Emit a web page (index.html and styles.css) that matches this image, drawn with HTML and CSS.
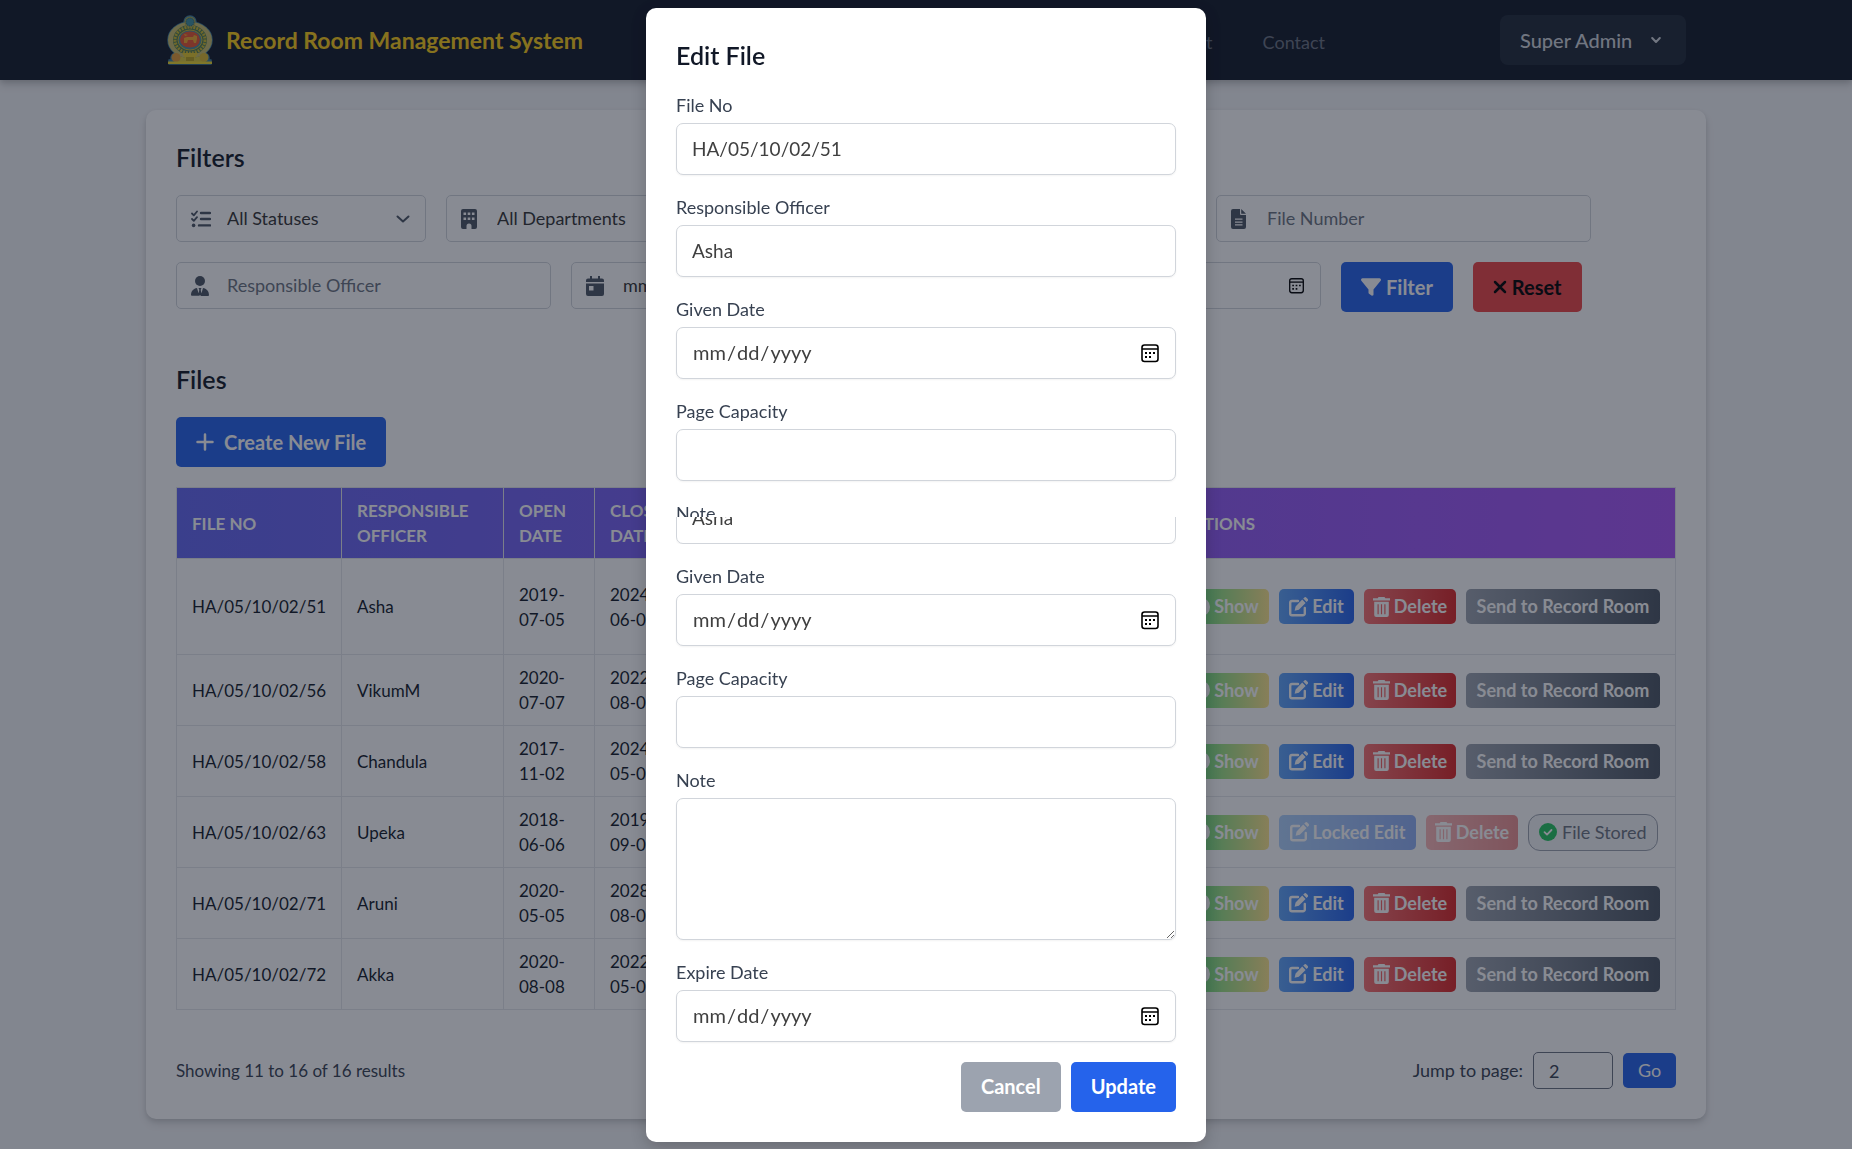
FILE: index.html
```html
<!DOCTYPE html>
<html lang="en">
<head>
<meta charset="utf-8">
<meta name="viewport" content="width=device-width, initial-scale=1">
<title>Record Room Management System</title>
<link rel="stylesheet" href="styles.css">
</head>
<body>

<svg class="sprite" aria-hidden="true">
  <symbol id="i-tasks" viewBox="0 0 20 20"><path d="M1 4.5l1.8 1.8L6 2.5M1 10l1.8 1.8L6 8.2" fill="none" stroke="currentColor" stroke-width="1.8" stroke-linecap="round" stroke-linejoin="round"/><circle cx="2.6" cy="16.4" r="1.8"/><path d="M10 4h9M10 10h9M8 16.4h11" fill="none" stroke="currentColor" stroke-width="2.4" stroke-linecap="round"/></symbol>
  <symbol id="i-building" viewBox="0 0 16 20"><path fill-rule="evenodd" d="M2 0h12a2 2 0 0 1 2 2v16a2 2 0 0 1-2 2h-3.5v-3a2.5 2.5 0 0 0-5 0v3H2a2 2 0 0 1-2-2V2a2 2 0 0 1 2-2zM2.5 3.5v2.6h2.6V3.500zM6.700 3.500v2.600h2.600V3.500zM10.900 3.500v2.600h2.600V3.500zM2.500 8.500v2.600h2.600V8.500zM6.700 8.500v2.600h2.600V8.500zM10.900 8.500v2.600h2.600V8.500z"/></symbol>
  <symbol id="i-file" viewBox="0 0 15 20"><path fill-rule="evenodd" d="M2 0h7v5a1 1 0 0 0 1 1h5v12a2 2 0 0 1-2 2H2a2 2 0 0 1-2-2V2a2 2 0 0 1 2-2zM10.200 0L15 4.800h-4.800zM4 9.500v1.300h7.500V9.500zM4 12.400v1.300h7.500v-1.300zM4 15.300v1.300h7.500v-1.300z"/></symbol>
  <symbol id="i-officer" viewBox="0 0 18 20"><circle cx="9" cy="5" r="5"/><path d="M6 12l2.300 7.800H.9A.9.9 0 0 1 0 19c0-3.800 2.500-6.500 6-7zM12 12c3.500.5 6 3.200 6 7a.9.9 0 0 1-.9.900H9.700zM7.500 12h3l-.8 1.700.8 4L9 20l-1.500-2.300.8-4z"/></symbol>
  <symbol id="i-calendar" viewBox="0 0 18 20"><path fill-rule="evenodd" d="M4 0h2v2.500h6V0h2v2.500h2a2 2 0 0 1 2 2V6H0V4.500a2 2 0 0 1 2-2h2zM0 7.500h18V18a2 2 0 0 1-2 2H2a2 2 0 0 1-2-2zM3 10v4.500h4.500V10z"/></symbol>
  <symbol id="i-filter" viewBox="0 0 512 448"><path transform="translate(0-32)" d="M3.900 54.900C10.500 40.900 24.500 32 40 32H472c15.500 0 29.500 8.900 36.100 22.900s4.600 30.500-5.200 42.500L320 320.900V448c0 12.100-6.800 23.200-17.700 28.600s-23.800 4.300-33.500-3l-64-48c-8.100-6-12.800-15.500-12.800-25.600V320.900L9 97.300C-.7 85.400-2.800 68.800 3.900 54.900z"/></symbol>
  <symbol id="i-x" viewBox="0 0 14 14"><path d="M2 2l10 10M12 2L2 12" fill="none" stroke="currentColor" stroke-width="2.500" stroke-linecap="round"/></symbol>
  <symbol id="i-plus" viewBox="0 0 18 18"><path d="M9 1.500v15M1.500 9h15" fill="none" stroke="currentColor" stroke-width="2.500" stroke-linecap="round"/></symbol>
  <symbol id="i-edit" viewBox="0 0 19 20"><path d="M9 4H3a1.800 1.800 0 0 0-1.800 1.800V16.500A1.800 1.800 0 0 0 3 18.300h11a1.800 1.800 0 0 0 1.800-1.800V11" fill="none" stroke="currentColor" stroke-width="2.400" stroke-linecap="round"/><path d="M13.200 2.600l3.400 3.400-6.800 6.800-4.200 1 1-4.300zM14.200 1.600l.9-.9a1.700 1.700 0 0 1 2.400 0l1 1a1.700 1.700 0 0 1 0 2.400l-.9.900z"/></symbol>
  <symbol id="i-trash" viewBox="0 0 17 20"><path fill-rule="evenodd" d="M5.500 0h6l.8 1.200H17v2.400H0V1.200h4.700zM1.200 4.800h14.600V18a2 2 0 0 1-2 2H3.200a2 2 0 0 1-2-2zM4.500 7.300v10h1.200v-10zM7.900 7.300v10h1.200v-10zM11.300 7.300v10h1.200v-10z"/></symbol>
  <symbol id="i-eye" viewBox="0 0 20 20"><path fill-rule="evenodd" d="M10 0a10 10 0 1 1 0 20 10 10 0 0 1 0-20zm0 5a5 5 0 1 0 0 10 5 5 0 0 0 0-10z"/></symbol>
  <symbol id="i-chev" viewBox="0 0 14 8"><path d="M1.500 1.500L7 6.500l5.500-5" fill="none" stroke="currentColor" stroke-width="2" stroke-linecap="round" stroke-linejoin="round"/></symbol>
  <symbol id="i-chev-bold" viewBox="0 0 10 8"><path d="M1.200 2L5 6l3.800-4" fill="none" stroke="currentColor" stroke-width="2" stroke-linecap="round" stroke-linejoin="round"/></symbol>
  <symbol id="i-check" viewBox="0 0 18 18"><circle cx="9" cy="9" r="9" fill="#22c55e"/><path d="M5.500 9.200l2.500 2.400 4.500-4.600" fill="none" stroke="#fff" stroke-width="1.800" stroke-linecap="round" stroke-linejoin="round"/></symbol>
</svg>

<header class="topbar">
  <div class="topbar-inner">
    <a class="brand" href="#">
      <svg class="emblem" viewBox="0 0 48 50" aria-hidden="true">
        <g fill="#3f7f9c" stroke="#3f7f9c" stroke-width="1.500" stroke-linejoin="round"><circle cx="24" cy="7" r="6"/><ellipse cx="24" cy="25" rx="22" ry="18"/><circle cx="10" cy="43" r="5"/><circle cx="38" cy="43" r="5"/><path d="M3 45h42v4H3z"/></g>
        <ellipse cx="24" cy="25" rx="22" ry="18" fill="#c9bd6a"/>
        <path d="M8 38q16 10 32 0l-4 10H12z" fill="#d8c93a"/>
        <ellipse cx="24" cy="25" rx="17" ry="15" fill="#4d7a52"/>
        <ellipse cx="24" cy="25" rx="15" ry="13" fill="none" stroke="#cdb82c" stroke-width="3" stroke-dasharray="2 1"/>
        <ellipse cx="24" cy="25" rx="12" ry="10" fill="#4d8a9a" stroke="#cdb82c" stroke-width="1"/>
        <ellipse cx="24" cy="24.500" rx="10" ry="8" fill="#e8552f"/>
        <path d="M18 27v-4l3-1h6l1-2 3 1v3l-1 4h-2l-1-3h-5l-1 3h-3zM19 21l-1-2 4 1z" fill="#f0a82c"/>
        <circle cx="24" cy="7" r="5.500" fill="#a9a54a"/>
        <circle cx="24" cy="7" r="4" fill="#3f8f9c" stroke="#275f6b" stroke-dasharray="1 1"/>
        <path d="M16 38h16l-3 5H19z" fill="#e4c92a"/><path d="M20 42h8v4h-8z" fill="#b9a21e"/>
        <circle cx="10" cy="42.500" r="4.500" fill="#e39a34"/><circle cx="38" cy="42.500" r="4.500" fill="#dcb92c"/>
        <path d="M2 46.500h44v2.500H2z" fill="#ecd62c"/>
      </svg>
      <span>Record Room Management System</span>
    </a>
    <nav class="links"><a href="#">About</a><a href="#">Contact</a></nav>
    <button class="user" type="button">Super Admin <svg aria-hidden="true"><use href="#i-chev-bold"/></svg></button>
  </div>
</header>

<main class="card">
  <h2>Filters</h2>
  <form class="filters">
    <label class="field short"><svg class="w20"><use href="#i-tasks"/></svg><select aria-label="Status"><option>All Statuses</option></select><svg class="arrow"><use href="#i-chev"/></svg></label>
    <label class="field short"><svg class="w16"><use href="#i-building"/></svg><select aria-label="Department"><option>All Departments</option></select><svg class="arrow"><use href="#i-chev"/></svg></label>
    <label class="field long"><input type="text" aria-label="Search"></label>
    <label class="field"><svg class="w15"><use href="#i-file"/></svg><input type="text" placeholder="File Number" aria-label="File Number"></label>
    <label class="field"><svg class="w18"><use href="#i-officer"/></svg><input type="text" placeholder="Responsible Officer" aria-label="Responsible Officer"></label>
    <label class="field date"><svg class="w18"><use href="#i-calendar"/></svg><input type="date" aria-label="From date"></label>
    <label class="field date"><svg class="w18"><use href="#i-calendar"/></svg><input type="date" aria-label="To date"></label>
    <button class="btn primary filter" type="button"><svg><use href="#i-filter"/></svg>Filter</button>
    <button class="btn danger" type="reset"><svg><use href="#i-x"/></svg>Reset</button>
  </form>

  <h2>Files</h2>
  <button class="btn primary create" type="button"><svg><use href="#i-plus"/></svg>Create New File</button>

  <table class="files">
    <colgroup><col class="c-no"><col class="c-officer"><col class="c-date"><col class="c-date"><col><col class="c-actions"></colgroup>
    <thead><tr><th>File No</th><th>Responsible Officer</th><th>Open Date</th><th>Close Date</th><th></th><th>Actions</th></tr></thead>
    <tbody>
      <tr class="tall"><td>HA/05/10/02/51</td><td>Asha</td><td>2019-07-05</td><td>2024-06-05</td><td></td><td><div class="actions"><button class="act show"><svg><use href="#i-eye"/></svg>Show</button><button class="act edit"><svg><use href="#i-edit"/></svg>Edit</button><button class="act delete"><svg><use href="#i-trash"/></svg>Delete</button><button class="act send">Send to Record Room</button></div></td></tr>
      <tr><td>HA/05/10/02/56</td><td>VikumM</td><td>2020-07-07</td><td>2022-08-07</td><td></td><td><div class="actions"><button class="act show"><svg><use href="#i-eye"/></svg>Show</button><button class="act edit"><svg><use href="#i-edit"/></svg>Edit</button><button class="act delete"><svg><use href="#i-trash"/></svg>Delete</button><button class="act send">Send to Record Room</button></div></td></tr>
      <tr><td>HA/05/10/02/58</td><td>Chandula</td><td>2017-11-02</td><td>2024-05-02</td><td></td><td><div class="actions"><button class="act show"><svg><use href="#i-eye"/></svg>Show</button><button class="act edit"><svg><use href="#i-edit"/></svg>Edit</button><button class="act delete"><svg><use href="#i-trash"/></svg>Delete</button><button class="act send">Send to Record Room</button></div></td></tr>
      <tr><td>HA/05/10/02/63</td><td>Upeka</td><td>2018-06-06</td><td>2019-09-06</td><td></td><td><div class="actions"><button class="act show"><svg><use href="#i-eye"/></svg>Show</button><button class="act edit locked" disabled><svg><use href="#i-edit"/></svg>Locked Edit</button><button class="act delete" disabled><svg><use href="#i-trash"/></svg>Delete</button><span class="stored"><svg><use href="#i-check"/></svg>File Stored</span></div></td></tr>
      <tr><td>HA/05/10/02/71</td><td>Aruni</td><td>2020-05-05</td><td>2028-08-05</td><td></td><td><div class="actions"><button class="act show"><svg><use href="#i-eye"/></svg>Show</button><button class="act edit"><svg><use href="#i-edit"/></svg>Edit</button><button class="act delete"><svg><use href="#i-trash"/></svg>Delete</button><button class="act send">Send to Record Room</button></div></td></tr>
      <tr><td>HA/05/10/02/72</td><td>Akka</td><td>2020-08-08</td><td>2022-05-08</td><td></td><td><div class="actions"><button class="act show"><svg><use href="#i-eye"/></svg>Show</button><button class="act edit"><svg><use href="#i-edit"/></svg>Edit</button><button class="act delete"><svg><use href="#i-trash"/></svg>Delete</button><button class="act send">Send to Record Room</button></div></td></tr>
    </tbody>
  </table>

  <footer class="pager">
    <span>Showing 11 to 16 of 16 results</span>
    <form class="jump"><label for="page">Jump to page:</label><input id="page" type="text" value="2"><button type="button">Go</button></form>
  </footer>
</main>

<div class="overlay">
  <section class="modal" role="dialog" aria-labelledby="modal-title">
    <h2 id="modal-title">Edit File</h2>
    <form>
      <div class="group"><label for="no">File No</label><input id="no" type="text" value="HA/05/10/02/51"></div>
      <div class="group"><label for="officer">Responsible Officer</label><input id="officer" type="text" value="Asha"></div>
      <div class="group"><label for="given">Given Date</label><input id="given" type="date"></div>
      <div class="group"><label for="capacity">Page Capacity</label><input id="capacity" type="text"></div>
      <div class="clip label-clip"><label for="note">Note</label></div>
      <div class="clip input-clip"><input type="text" value="Asha" aria-label="Responsible Officer"></div>
      <div class="group"><label for="given2">Given Date</label><input id="given2" type="date"></div>
      <div class="group"><label for="capacity2">Page Capacity</label><input id="capacity2" type="text"></div>
      <div class="group"><label for="note">Note</label><textarea id="note"></textarea></div>
      <div class="group"><label for="expire">Expire Date</label><input id="expire" type="date"></div>
      <div class="buttons"><button class="btn cancel" type="button">Cancel</button><button class="btn primary" type="button">Update</button></div>
    </form>
  </section>
</div>

</body>
</html>
```
FILE: styles.css
```css
*, *::before, *::after { box-sizing: border-box; }

body {
  margin: 0;
  min-height: 100vh;
  overflow: hidden;
  background: #f3f4f6;
  color: #111827;
  font-family: Lato, "Open Sans", sans-serif;
  font-size: 18px;
  line-height: 25px;
}

button, input, select, textarea { font: inherit; color: inherit; }
button { border: 0; cursor: pointer; }
a { color: inherit; text-decoration: none; }
svg { fill: currentColor; flex: none; }
h2 { margin: 0; font-size: 25px; line-height: 35px; font-weight: 600; }
.sprite { position: absolute; width: 0; height: 0; }

/* Top bar */
.topbar {
  background: #111827;
  box-shadow: 0 5px 8px rgba(0, 0, 0, .15), 0 2px 5px rgba(0, 0, 0, .1);
}
.topbar-inner {
  display: flex;
  align-items: center;
  max-width: 1560px;
  height: 80px;
  margin: 0 auto;
  padding: 0 20px;
}
.brand {
  display: flex;
  align-items: center;
  gap: 12px;
  color: #facc15;
  font-size: 23px;
  font-weight: 700;
}
.emblem { width: 48px; height: 50px; }
.links {
  display: flex;
  gap: 50px;
  margin: 4px 175px 0 auto;
  color: #6b7280;
}
.user {
  display: flex;
  align-items: center;
  justify-content: space-between;
  width: 186px;
  height: 50px;
  padding: 0 25px 0 20px;
  border-radius: 8px;
  background: #1f2937;
  color: #d1d5db;
  font-size: 20px;
  font-weight: 500;
}
.user svg { width: 10px; height: 8px; }

/* Main card */
.card {
  max-width: 1560px;
  margin: 30px auto 0;
  padding: 30px;
  border-radius: 10px;
  background: #fff;
  box-shadow: 0 5px 8px rgba(0, 0, 0, .1), 0 2px 5px rgba(0, 0, 0, .1);
}
.filters {
  display: flex;
  flex-wrap: wrap;
  gap: 20px;
  margin: 20px 0 50px;
}
.field {
  display: flex;
  align-items: center;
  width: 375px;
  height: 47px;
  padding: 0 15px 0 14px;
  border: 1px solid #d1d5db;
  border-radius: 5px;
}
.field.short { width: 250px; }
.field.long { width: 480px; }
.field.date { width: 365px; }
.field > svg { height: 20px; color: #4b5563; }
.field .w15 { width: 15px; margin-right: 21px; }
.field .w16 { width: 16px; margin-right: 20px; }
.field .w18 { width: 18px; margin-right: 18px; }
.field .w20 { width: 20px; margin-right: 16px; }
.field .arrow { width: 14px; height: 8px; }
.field input, .field select {
  flex: 1;
  min-width: 0;
  padding: 0;
  border: 0;
  background: none;
  color: #333;
  appearance: none;
  outline: 0;
}
.field input::placeholder { color: #6b7280; opacity: 1; }

input::-webkit-calendar-picker-indicator {
  width: 20px;
  height: 20px;
  padding: 0;
  background: url("data:image/svg+xml,%3Csvg xmlns='http://www.w3.org/2000/svg' viewBox='0 0 20 20'%3E%3Crect x='2' y='2' width='16' height='16.500' rx='2.500' fill='none' stroke='black' stroke-width='1.600'/%3E%3Cpath d='M2 6h16' stroke='black' stroke-width='1.600'/%3E%3Cpath d='M5 9h2v2H5zM9 9h2v2H9zM13 9h2v2h-2zM5 13h2v2H5zM9 13h2v2H9z'/%3E%3C/svg%3E") center / contain no-repeat;
}
.field input::-webkit-calendar-picker-indicator { width: 17px; height: 17px; }

.btn {
  display: inline-flex;
  align-items: center;
  justify-content: center;
  height: 50px;
  padding: 0 20px;
  border-radius: 5px;
  color: #fff;
  font-size: 20px;
  font-weight: 700;
}
.primary { background: #2563eb; }
.danger { background: #ef4444; color: #000; }
.cancel { background: #9ca3af; }
.filter svg { width: 20px; height: 18px; margin-right: 5px; }
.danger svg { width: 14px; height: 14px; margin-right: 5px; }
.create { margin: 20px 0; }
.create svg { width: 18px; height: 18px; margin-right: 10px; }

/* Files table */
.files {
  width: 100%;
  table-layout: fixed;
  border-collapse: collapse;
  font-size: 17px;
}
.c-no { width: 165px; }
.c-officer { width: 162px; }
.c-date { width: 91px; }
.c-actions { width: 510px; }
.files thead { background: linear-gradient(to right, #6366f1, #a855f7); }
.files th, .files td {
  padding: 0 15px;
  border: 1px solid #e5e7eb;
  text-align: left;
}
.files th {
  height: 71px;
  color: #fff;
  font-weight: 700;
  text-transform: uppercase;
}
.files td { height: 71px; }
.files .tall td { height: 96px; }
.actions { display: flex; align-items: center; gap: 10px; }
.act {
  display: flex;
  align-items: center;
  justify-content: center;
  gap: 4px;
  height: 35px;
  padding: 0;
  border-radius: 5px;
  color: #fff;
  font-size: 18px;
  font-weight: 700;
  white-space: nowrap;
}
.act svg { width: 19px; height: 20px; }
.show { width: 88px; background: linear-gradient(to right, #4ade80, #fde68a); }
.edit { width: 75px; background: linear-gradient(to right, #60a5fa, #2563eb); }
.edit.locked { width: 137px; }
.delete { width: 92px; background: linear-gradient(to right, #f87171, #dc2626); }
.delete svg { width: 17px; }
.send { width: 194px; background: linear-gradient(to right, #9ca3af, #4b5563); }
.act:disabled { opacity: .5; }
.stored {
  display: flex;
  align-items: center;
  gap: 5px;
  height: 37px;
  padding: 0 10px;
  border: 1px solid #9ca3af;
  border-radius: 12px;
  background: #f3f4f6;
  color: #6b7280;
  font-size: 18px;
}
.stored svg { width: 18px; height: 18px; }

/* Pagination */
.pager {
  display: flex;
  align-items: center;
  justify-content: space-between;
  margin-top: 42px;
  color: #374151;
  font-size: 17px;
}
.jump { display: flex; align-items: center; gap: 10px; font-size: 18px; }
.jump input {
  width: 80px;
  height: 37px;
  padding: 0 15px;
  border: 1px solid #6b7280;
  border-radius: 5px;
  background: none;
}
.jump button {
  width: 53px;
  height: 35px;
  padding: 0;
  border-radius: 5px;
  background: #2563eb;
  color: #fff;
}

/* Modal */
.overlay {
  position: fixed;
  inset: 0;
  display: flex;
  align-items: center;
  justify-content: center;
  background: rgba(17, 24, 39, .5);
}
.modal {
  width: 560px;
  padding: 30px;
  border-radius: 10px;
  background: #fff;
  box-shadow: 0 5px 16px rgba(0, 0, 0, .2);
}
.modal h2 { margin-bottom: 20px; }
.group { margin-bottom: 20px; }
.modal label { display: block; margin-bottom: 5px; color: #374151; }
.modal input, .modal textarea {
  display: block;
  width: 100%;
  height: 52px;
  padding: 0 15px;
  border: 1px solid #d1d5db;
  border-radius: 7px;
  background: #fff;
  box-shadow: 0 1px 2px rgba(0, 0, 0, .05);
  color: #404040;
  font-size: 19px;
}
.modal input[type="date"] { font-size: 20px; }
.modal textarea { height: 142px; resize: vertical; }
.clip { overflow: hidden; }
.label-clip { height: 16px; }
.input-clip {
  display: flex;
  align-items: flex-end;
  height: 27px;
  margin-bottom: 20px;
}
.input-clip input { flex: none; }
.buttons { display: flex; justify-content: flex-end; gap: 10px; }
```
